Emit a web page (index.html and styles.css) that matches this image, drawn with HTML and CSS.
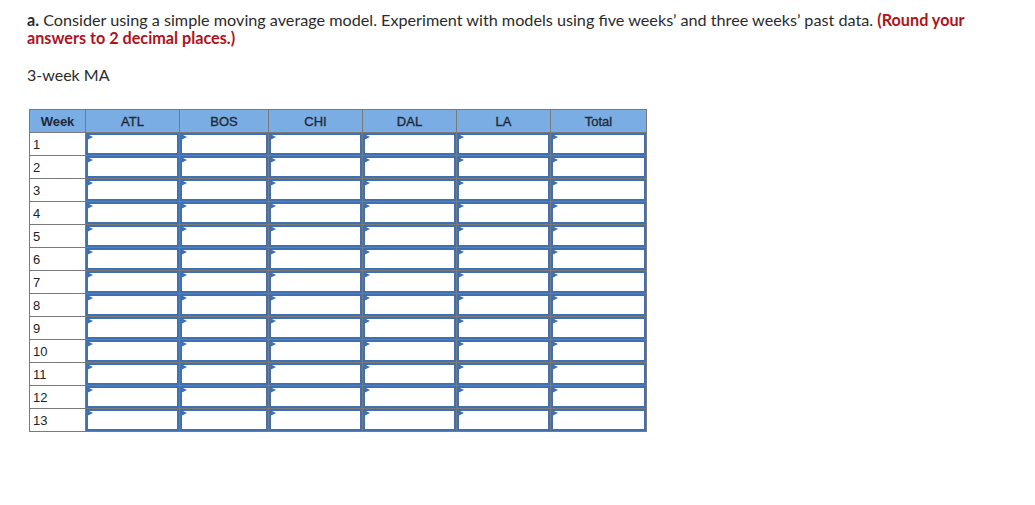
FILE: index.html
```html
<!DOCTYPE html>
<html>
<head>
<meta charset="utf-8">
<link rel="stylesheet" href="styles.css">
</head>
<body>
<div class="page">
  <p class="question"><b class="label">a.</b> Consider using a simple moving average model. Experiment with models using five weeks’ and three weeks’ past data. <strong class="red">(Round your</strong><br><strong class="red">answers to 2 decimal places.)</strong></p>
  <p class="sub">3-week MA</p>
  <table class="grid">
    <colgroup>
      <col class="c-week"><col class="c-atl"><col class="c-bos"><col class="c-chi"><col class="c-dal"><col class="c-la"><col class="c-total">
    </colgroup>
    <thead>
      <tr><th>Week</th><th>ATL</th><th>BOS</th><th>CHI</th><th>DAL</th><th>LA</th><th>Total</th></tr>
    </thead>
    <tbody>
      <tr><td class="wk">1</td><td><div class="in"></div></td><td><div class="in"></div></td><td><div class="in"></div></td><td><div class="in"></div></td><td><div class="in"></div></td><td><div class="in"></div></td></tr>
      <tr><td class="wk">2</td><td><div class="in"></div></td><td><div class="in"></div></td><td><div class="in"></div></td><td><div class="in"></div></td><td><div class="in"></div></td><td><div class="in"></div></td></tr>
      <tr><td class="wk">3</td><td><div class="in"></div></td><td><div class="in"></div></td><td><div class="in"></div></td><td><div class="in"></div></td><td><div class="in"></div></td><td><div class="in"></div></td></tr>
      <tr><td class="wk">4</td><td><div class="in"></div></td><td><div class="in"></div></td><td><div class="in"></div></td><td><div class="in"></div></td><td><div class="in"></div></td><td><div class="in"></div></td></tr>
      <tr><td class="wk">5</td><td><div class="in"></div></td><td><div class="in"></div></td><td><div class="in"></div></td><td><div class="in"></div></td><td><div class="in"></div></td><td><div class="in"></div></td></tr>
      <tr><td class="wk">6</td><td><div class="in"></div></td><td><div class="in"></div></td><td><div class="in"></div></td><td><div class="in"></div></td><td><div class="in"></div></td><td><div class="in"></div></td></tr>
      <tr><td class="wk">7</td><td><div class="in"></div></td><td><div class="in"></div></td><td><div class="in"></div></td><td><div class="in"></div></td><td><div class="in"></div></td><td><div class="in"></div></td></tr>
      <tr><td class="wk">8</td><td><div class="in"></div></td><td><div class="in"></div></td><td><div class="in"></div></td><td><div class="in"></div></td><td><div class="in"></div></td><td><div class="in"></div></td></tr>
      <tr><td class="wk">9</td><td><div class="in"></div></td><td><div class="in"></div></td><td><div class="in"></div></td><td><div class="in"></div></td><td><div class="in"></div></td><td><div class="in"></div></td></tr>
      <tr><td class="wk">10</td><td><div class="in"></div></td><td><div class="in"></div></td><td><div class="in"></div></td><td><div class="in"></div></td><td><div class="in"></div></td><td><div class="in"></div></td></tr>
      <tr><td class="wk">11</td><td><div class="in"></div></td><td><div class="in"></div></td><td><div class="in"></div></td><td><div class="in"></div></td><td><div class="in"></div></td><td><div class="in"></div></td></tr>
      <tr><td class="wk">12</td><td><div class="in"></div></td><td><div class="in"></div></td><td><div class="in"></div></td><td><div class="in"></div></td><td><div class="in"></div></td><td><div class="in"></div></td></tr>
      <tr><td class="wk">13</td><td><div class="in"></div></td><td><div class="in"></div></td><td><div class="in"></div></td><td><div class="in"></div></td><td><div class="in"></div></td><td><div class="in"></div></td></tr>
    </tbody>
  </table>
</div>
</body>
</html>
```
FILE: styles.css
```css
html, body {
  margin: 0;
  padding: 0;
  background: #ffffff;
}
.page {
  padding: 11px 0 0 27px;
  font-family: "Lato", "Open Sans", sans-serif;
  color: #2b2b2b;
}
.question {
  margin: 0;
  width: 960px;
  font-size: 16.2px;
  line-height: 18px;
}
.label {
  font-weight: 700;
}
.red {
  color: #b0121c;
  font-weight: 700;
}
.sub {
  margin: 19px 0 0 0;
  font-size: 16px;
  line-height: 18px;
}
.grid {
  margin: 25px 0 0 2px;
  border-collapse: collapse;
  font-family: "Liberation Sans", Arial, sans-serif;
  font-size: 13px;
  color: #222;
}
.c-week { width: 56px; }
.c-atl { width: 94px; }
.c-bos { width: 89px; }
.c-chi { width: 94px; }
.c-dal { width: 94px; }
.c-la { width: 94px; }
.c-total { width: 96px; }
.grid th {
  background: #7aade3;
  border: 1px solid #7a7a7a;
  height: 22px;
  padding: 0;
  font-weight: 700;
  text-align: center;
  color: #1f2a38;
}
.grid th:not(:first-child) {
  font-weight: 400;
  -webkit-text-stroke: 0.35px #1f2a38;
}
.grid td {
  border: 1px solid #7a7a7a;
  padding: 0;
  height: 22px;
}
.grid td.wk {
  padding-left: 3px;
  font-size: 13px;
  vertical-align: middle;
}
.in {
  position: relative;
  box-sizing: border-box;
  height: 22px;
  border: 2px solid #3e70b2;
  background: #fff;
}
.in::before {
  content: "";
  position: absolute;
  left: -1px;
  top: -1px;
  border-left: 6px solid #3e70b2;
  border-top: 3.5px solid transparent;
  border-bottom: 3.5px solid transparent;
}
```
